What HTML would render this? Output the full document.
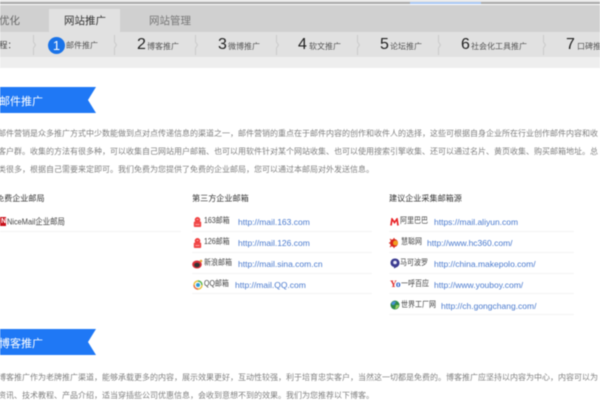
<!DOCTYPE html>
<html lang="zh"><head><meta charset="utf-8"><title>网站推广</title>
<style>
html,body{margin:0;padding:0;width:600px;height:400px;overflow:hidden;background:#fff}
#p{position:absolute;left:0;top:0;width:600px;height:400px;overflow:hidden;filter:blur(.45px);font-family:"Liberation Sans","Noto Sans CJK SC",sans-serif}
#p div,#p span,#p svg{position:absolute;white-space:nowrap}
.r{background:#f3f3f3;height:1px}
.t{font-size:8px;line-height:12px;color:#808080}
.h{font-size:8.1px;line-height:12px;color:#333}
.n{font-size:7px;line-height:12px;color:#444;transform:scaleY(1.15)}
.u{font-size:8.5px;line-height:12px;color:#4a7ace}
.d{font-size:16px;line-height:20px;color:#222}
.s{font-size:8px;line-height:12px;color:#555}
</style></head><body><div id="p">
<div style="left:0;top:0;width:600px;height:2px;background:#e8e8e8"></div>
<div style="left:0;top:2px;width:600px;height:2px;background:#a8a8a8"></div>
<div style="left:410px;top:2px;width:71px;height:2px;background:#a9c8f4"></div>
<div style="left:0;top:5px;width:600px;height:27px;background:#d0d0d0"></div>
<div style="left:49px;top:9px;width:71px;height:23px;background:#e1e1e1"></div>
<div style="left:0;top:32px;width:600px;height:25px;background:#e1e1e1"></div>
<div style="left:0;top:57px;width:600px;height:11px;background:#eeeeee"></div>
<div style="left:-1px;top:14px;font-size:10.5px;line-height:14px;color:#666">优化</div>
<div style="left:64px;top:14px;font-size:10.5px;line-height:14px;color:#333">网站推广</div>
<div style="left:149px;top:14px;font-size:10.5px;line-height:14px;color:#777">网站管理</div>
<div style="left:-1px;top:39px;font-size:8.5px;line-height:12px;color:#444">程：</div>
<svg style="left:0;top:34px" width="600" height="22" fill="none" stroke="#cacaca" stroke-width="1"><path d="M33.500 1V8L35.500 11L33.500 14V21M114.500 1V8L116.500 11L114.500 14V21M195.500 1V8L197.500 11L195.500 14V21M276.500 1V8L278.500 11L276.500 14V21M357.500 1V8L359.500 11L357.500 14V21M438.500 1V8L440.500 11L438.500 14V21M543.500 1V8L545.500 11L543.500 14V21"/></svg>
<div style="left:48px;top:36.500px;width:17px;height:17px;border-radius:50%;background:#1a73e8;color:#fff;font-size:13px;line-height:17px;text-align:center">1</div>
<div class="s" style="left:66px;top:39.500px">邮件推广</div>
<div class="d" style="left:137px;top:35px">2</div><div class="s" style="left:147px;top:41px">博客推广</div>
<div class="d" style="left:218px;top:35px">3</div><div class="s" style="left:228px;top:41px">微博推广</div>
<div class="d" style="left:298px;top:35px">4</div><div class="s" style="left:309px;top:41px">软文推广</div>
<div class="d" style="left:380px;top:35px">5</div><div class="s" style="left:390px;top:41px">论坛推广</div>
<div class="d" style="left:461px;top:35px">6</div><div class="s" style="left:471px;top:41px">社会化工具推广</div>
<div class="d" style="left:566px;top:35px">7</div><div class="s" style="left:577px;top:41px">口碑推广</div>

<svg style="left:0;top:87px" width="97" height="27"><path d="M0 0H96L88 13L96 26H0Z" fill="#1f78f5"/></svg>
<div style="left:-1px;top:95px;font-size:11px;line-height:14px;color:#fff">邮件推广</div>
<div class="t" style="left:-2px;top:128px">邮件营销是众多推广方式中少数能做到点对点传递信息的渠道之一，邮件营销的重点在于邮件内容的创作和收件人的选择，这些可根据自身企业所在行业创作邮件内容和收</div>
<div class="t" style="left:-2px;top:146px">客户群。收集的方法有很多种，可以收集自己网站用户邮箱、也可以用软件针对某个网站收集、也可以使用搜索引擎收集、还可以通过名片、黄页收集、购买邮箱地址。总</div>
<div class="t" style="left:-2px;top:164px">类很多，根据自己需要来定即可。我们免费为您提供了免费的企业邮局，您可以通过本邮局对外发送信息。</div>

<div class="h" style="left:-4px;top:193px">免费企业邮局</div>
<div class="h" style="left:192px;top:193px">第三方企业邮箱</div>
<div class="h" style="left:389px;top:193px">建议企业采集邮箱源</div>

<div style="left:0;top:217px;width:6px;height:9px;background:#c8101a;color:#fff;font-size:7px;line-height:9px;font-weight:bold;text-align:right">N</div>
<div class="n" style="left:7px;top:216px;font-size:7.4px">NiceMail企业邮局</div>
<div class="r" style="left:0;top:231px;width:181px"></div>

<svg style="left:193px;top:217px" width="9" height="10"><circle cx="4.500" cy="2.800" r="2.800" fill="#f04040"/><rect x=".8" y="4.500" width="7.400" height="5.500" rx="1" fill="#f04848"/><path d="M3.500 2.500H5.500M2.500 7.500H6.500" stroke="#fbb" stroke-width=".7"/></svg>
<div class="n" style="left:204px;top:216px">163邮箱</div><div class="u" style="left:238px;top:216px">http://mail.163.com</div>
<div class="r" style="left:192px;top:231px;width:180px"></div>
<svg style="left:193px;top:238px" width="9" height="10"><circle cx="4.500" cy="2.800" r="2.800" fill="#f04040"/><rect x=".8" y="4.500" width="7.400" height="5.500" rx="1" fill="#f04848"/><path d="M3.500 2.500H5.500M2.500 7.500H6.500" stroke="#fbb" stroke-width=".7"/></svg>
<div class="n" style="left:204px;top:237px">126邮箱</div><div class="u" style="left:238px;top:237px">http://mail.126.com</div>
<div class="r" style="left:192px;top:252px;width:180px"></div>
<svg style="left:192px;top:259px" width="11" height="10"><ellipse cx="5" cy="5.500" rx="4.800" ry="4" fill="#d9303a"/><ellipse cx="5" cy="6" rx="2.800" ry="2.300" fill="#333"/><circle cx="9" cy="2" r="1.300" fill="#e8a33a"/></svg>
<div class="n" style="left:204px;top:258px">新浪邮箱</div><div class="u" style="left:238px;top:258px">http://mail.sina.com.cn</div>
<div class="r" style="left:192px;top:273px;width:180px"></div>
<svg style="left:193px;top:280px" width="10" height="10"><circle cx="5" cy="5" r="4" fill="#fff" stroke="#e8c23a" stroke-width="1.400"/><path d="M5 1A4 4 0 0 1 9 5" stroke="#58b858" stroke-width="1.400" fill="none"/><path d="M1 5A4 4 0 0 0 5 9" stroke="#e86a4a" stroke-width="1.400" fill="none"/><circle cx="5" cy="5" r="2" fill="#2a9ad8"/></svg>
<div class="n" style="left:204px;top:279px">QQ邮箱</div><div class="u" style="left:235px;top:279px">http://mail.QQ.com</div>
<div class="r" style="left:192px;top:293px;width:180px"></div>

<svg style="left:390px;top:218px" width="9" height="8"><path d="M1 7.500L2 1L4.500 4.500L7 1L8 7.500" fill="none" stroke="#e8262a" stroke-width="1.700"/></svg>
<div class="n" style="left:400px;top:216px">阿里巴巴</div><div class="u" style="left:434px;top:216px">https://mail.aliyun.com</div>
<div class="r" style="left:389px;top:231px;width:185px"></div>
<svg style="left:389px;top:238px" width="11" height="10"><circle cx="5" cy="5" r="4" fill="#d8261c"/><circle cx="6.500" cy="5" r="2.500" fill="#f0a020"/><path d="M1 1L2.500 2.500M1 9L2.500 7.500M0 5H2M5 0V1.500M5 8.500V10" stroke="#d8261c"/></svg>
<div class="n" style="left:401px;top:237px">慧聪网</div><div class="u" style="left:427px;top:237px">http://www.hc360.com/</div>
<div class="r" style="left:389px;top:252px;width:185px"></div>
<svg style="left:390px;top:258px" width="10" height="11"><path d="M5 .5C8 .5 9.500 2.500 9.500 5C9.500 7.500 7.500 9 6 9.500L4 10.500L4 9C2 8.500 .5 7 .5 5C.5 2.500 2 .5 5 .5Z" fill="#3c3c90"/><circle cx="5" cy="4.500" r="1.800" fill="#e8e8f8"/></svg>
<div class="n" style="left:400px;top:258px">马可波罗</div><div class="u" style="left:434px;top:258px">http://china.makepolo.com/</div>
<div class="r" style="left:389px;top:273px;width:185px"></div>
<div style="left:390px;top:279px;font:bold 9.500px/12px 'Liberation Serif',serif;color:#e03030">Y<span style="position:static;color:#2a5fc8">o</span></div>
<div class="n" style="left:401px;top:279px">一呼百应</div><div class="u" style="left:434px;top:279px">http://www.youboy.com/</div>
<div class="r" style="left:389px;top:293px;width:185px"></div>
<svg style="left:390px;top:300px" width="10" height="10"><circle cx="5" cy="5" r="4.500" fill="#2f8a4a"/><path d="M1.500 3C3 1 5 1 6 2L4 5L2 5Z" fill="#4a90d8"/><path d="M5 9C7 9 9 7 9 5L6 5Z" fill="#9ad060"/></svg>
<div class="n" style="left:401px;top:300px">世界工厂网</div><div class="u" style="left:441px;top:300px">http://ch.gongchang.com/</div>
<div class="r" style="left:389px;top:314px;width:185px"></div>

<svg style="left:0;top:329px" width="97" height="27"><path d="M0 0H96L88 13L96 26H0Z" fill="#1f78f5"/></svg>
<div style="left:-1px;top:337px;font-size:11px;line-height:14px;color:#fff">博客推广</div>
<div class="t" style="left:-2px;top:372px">博客推广作为老牌推广渠道，能够承载更多的内容，展示效果更好，互动性较强，利于培育忠实客户，当然这一切都是免费的。博客推广应坚持以内容为中心，内容可以为</div>
<div class="t" style="left:-2px;top:390px">资讯、技术教程、产品介绍，适当穿插些公司优惠信息，会收到意想不到的效果。我们为您推荐以下博客。</div>
</div></body></html>
